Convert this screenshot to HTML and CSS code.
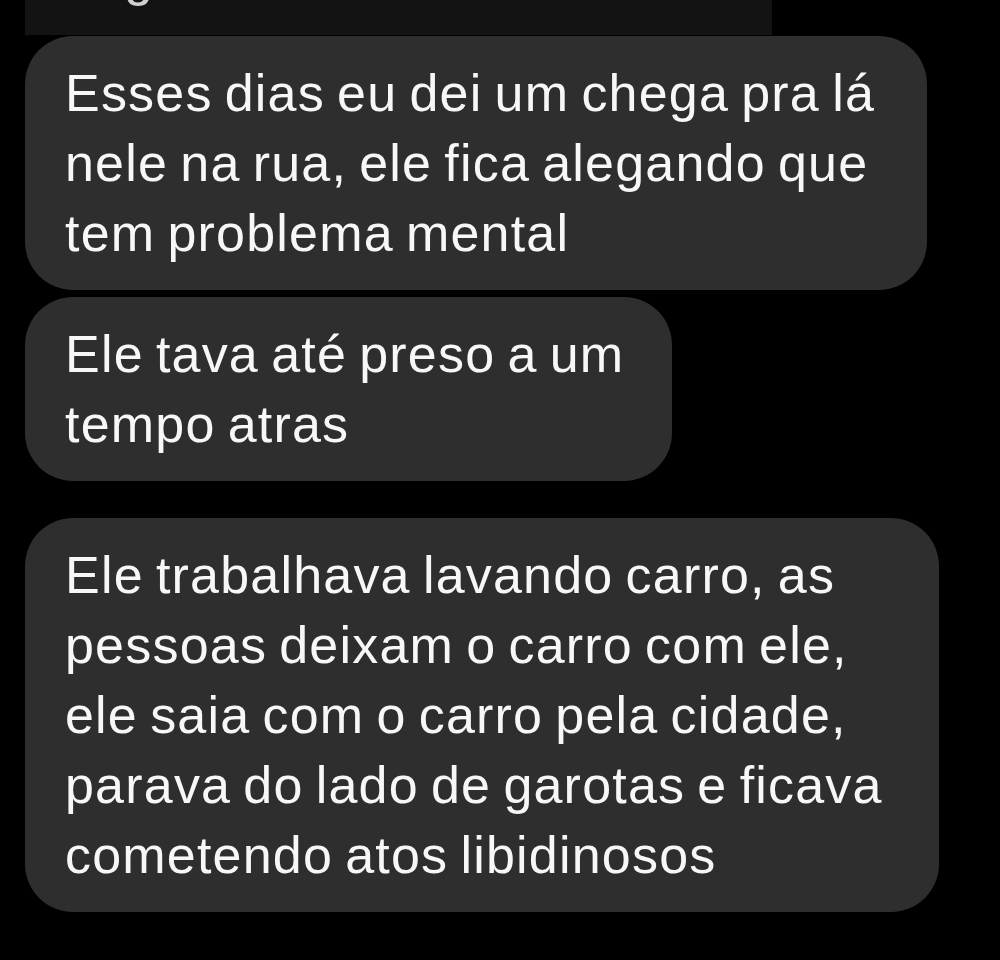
FILE: index.html
```html
<!DOCTYPE html>
<html lang="pt-BR">
<head>
    <meta charset="UTF-8">
    <meta name="viewport" content="width=device-width, initial-scale=1.0">
    <title>Conversa</title>
    <link rel="stylesheet" href="styles.css">
</head>
<body>

<section class="thread">
    <!-- previous message, cut off by the top of the screen -->
    <div class="prev">
        <p class="prev-text">g</p>
    </div>

    <div class="bubble bubble-one">
        <p>Esses dias eu dei um chega pra lá<br>nele na rua, ele fica alegando que<br>tem problema mental</p>
    </div>

    <div class="bubble bubble-two">
        <p>Ele tava até preso a um<br>tempo atras</p>
    </div>

    <div class="bubble bubble-three">
        <p>Ele trabalhava lavando carro, as<br>pessoas deixam o carro com ele,<br>ele saia com o carro pela cidade,<br>parava do lado de garotas e ficava<br>cometendo atos libidinosos</p>
    </div>
</section>

</body>
</html>
```

FILE: styles.css
```css
body {
    margin: 0;
    background-color: #000;
    color: #f7f7f7;
    font-family: "Liberation Sans", Arial, sans-serif;
}
.thread {
    display: flex;
    flex-direction: column;
    align-items: flex-start;
    padding-left: 25px;
    height: 960px;
    box-sizing: border-box;
}
.prev {
    width: 747px;
    height: 35px;
    background-color: #131313;
    overflow: hidden;
}
.prev-text {
    margin: -58px 0 0;
    padding-left: 99px;
    font-size: 52px;
    line-height: 70px;
    color: #cfcfcf;
}
.bubble {
    box-sizing: border-box;
    background-color: #2e2e2e;
    border-radius: 48px;
    padding: 22px 0 22px 40px;
}
.bubble p {
    margin: 0;
    font-size: 52px;
    line-height: 70px;
    letter-spacing: 1.2px;
    word-spacing: -3.5px;
    white-space: nowrap;
}
.bubble-one {
    width: 902px;
    margin-top: 1px;
}
.bubble-two {
    width: 647px;
    margin-top: 7px;
}
.bubble-three {
    width: 914px;
    margin-top: 37px;
}
```
